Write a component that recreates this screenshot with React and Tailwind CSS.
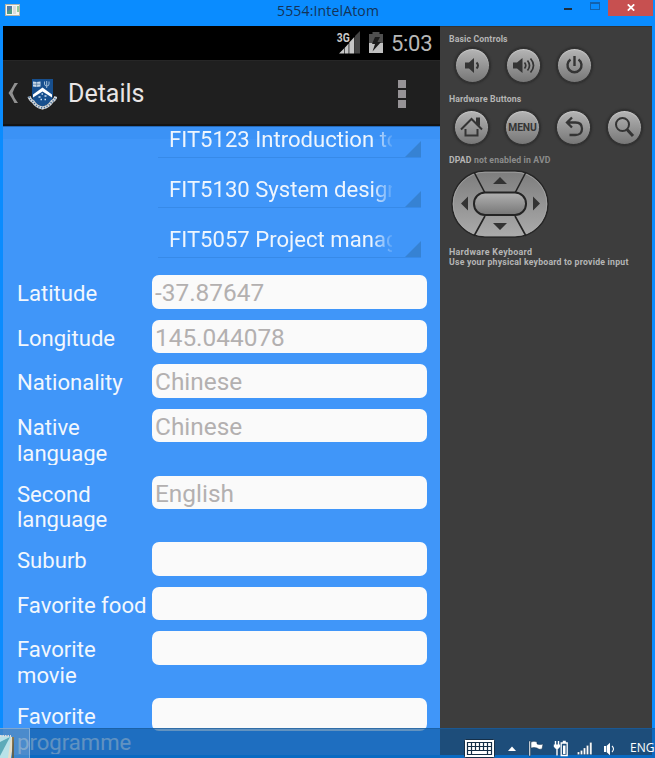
import React from "react";

const courses = ["FIT5123 Introduction to", "FIT5130 System design", "FIT5057 Project manage"];

const fields = [
  { lines: ["Latitude"], value: "-37.87647" },
  { lines: ["Longitude"], value: "145.044078" },
  { lines: ["Nationality"], value: "Chinese" },
  { lines: ["Native", "language"], value: "Chinese" },
  { lines: ["Second", "language"], value: "English" },
  { lines: ["Suburb"], value: "" },
  { lines: ["Favorite food"], value: "" },
  { lines: ["Favorite", "movie"], value: "" },
  { lines: ["Favorite", "programme"], value: "" },
];

function TitleBar() {
  return (
    <header className="flex h-[26px] shrink-0 items-start">
      <svg className="mt-1 ml-[5px] h-3 w-[15px] shrink-0" viewBox="0 0 15 12">
        <rect x=".5" y=".5" width="14" height="11" fill="#f4f4f0" stroke="#b5b5a8" />
        <rect x="2" y="2" width="5" height="8" fill="#4e9a86" />
        <path d="M2 2h5v2L2 8z" fill="#4f7aa8" />
        <rect x="8" y="2" width="3" height="8" fill="#dcdcdc" />
        <rect x="12" y="2" width="2" height="6" fill="#8fcb9b" />
      </svg>
      <div className="w-[257px]" />
      <div className="w-[281px] pt-[2px] font-['Open_Sans',sans-serif] text-[14px] leading-[18px] tracking-[0.16px] text-[#143357]">
        5554:IntelAtom
      </div>
      <div className="mt-2 ml-[6px] h-[2px] w-2 bg-[#1c2c3c]" />
      <div className="mt-[2px] ml-[18px] h-2 w-[10px] border border-t-2 border-[#1262ae]" />
      <div className="ml-2 flex h-4 w-[45px] items-center justify-center bg-[#c75050]">
        <svg className="mb-[2px] h-[7px] w-2" viewBox="0 0 8 7">
          <path d="M.8.4 7.2 6.6M7.2.4.8 6.6" stroke="#fff" strokeWidth="1.8" />
        </svg>
      </div>
    </header>
  );
}

function StatusBar() {
  return (
    <div className="flex h-[34px] items-start bg-black">
      <svg className="mt-1 ml-[333px] h-6 w-[26px] shrink-0" viewBox="0 0 26 24">
        <text x=".7" y="11.5" fontSize="12" fontWeight="700" textLength="13" lengthAdjust="spacingAndGlyphs" fill="#c9c9c9" fontFamily="Roboto, sans-serif">3G</text>
        <path d="M3 23.5 8 18.5v5z M8.600 18l4-4.500v10h-4z M13.300 12.500l5-5.500v16.500h-5z" fill="#c6c6c6" />
        <path d="M19 6l5-5v22.500h-5z" fill="#454545" />
      </svg>
      <svg className="mt-1 ml-[6px] h-6 w-[16px] shrink-0" viewBox="0 0 16 24">
        <path d="M4.500 2h7v2h3.500v11H1V4h3.500z" fill="#505050" />
        <path d="M1 13h14v10H1z" fill="#c0c0c0" />
        <path d="M7 7h5l-2.500 5H13L4.500 21.500 7 14H4z" fill="#1c1c1c" />
      </svg>
      <span className="ml-[7px] pt-[4px] text-[22px] leading-7 tracking-[-0.3px] text-[#b8b8b8]">5:03</span>
    </div>
  );
}

function Crest() {
  return (
    <svg className="h-[32px] w-[30px] shrink-0" viewBox="0 0 30 32">
      <path d="M5 1h21v17q0 6-10.500 11Q5 24 5 18z" fill="#174f8e" />
      <path d="M6 3.500l3.500.5 4-.5V8.500L9.500 9 6 8.500z" fill="#c8d8e8" />
      <path d="M9.700 4v5M6 6.200h7" stroke="#4b7198" strokeWidth=".7" />
      <path d="M17.500 3.500v2.500q0 2 2.300 2T22 6V3.500M19.700 3v7" stroke="#9fbbd6" strokeWidth="1" fill="none" />
      <path d="M15.500 9.500 25 16.500v3l-9.500-6L6 19.500v-3z" fill="#fff" />
      <path d="M11.500 19h2M17.500 18h2M14.500 16h1.500M13.500 21.500h1.500M17.500 21.500h1.500" stroke="#c9e0f3" strokeWidth="1.600" />
      <path d="M2 18.500q1.500 4 4 5 3 5 9.500 6.500Q22 28.500 25 23.500q2.500-1 4-5" fill="none" stroke="#d5d9dd" strokeWidth="3.200" />
      <path d="M2 18.500q1.500 4 4 5 3 5 9.500 6.500Q22 28.500 25 23.500q2.500-1 4-5" fill="none" stroke="#416890" strokeWidth="1.600" strokeDasharray="1.200 1.600" />
    </svg>
  );
}

function ActionBar() {
  return (
    <div className="flex h-[66px] items-center border-t border-b-2 border-[#262626] border-b-[#141414] bg-[#1f1f1f]">
      <svg className="mt-[1px] ml-[5px] h-5 w-[11px]" viewBox="0 0 11 20">
        <path d="M10 0Q6 5 4.500 10 6 15 10 20H6.500Q4 15 .5 10 4 5 6.500 0z" fill="#919191" />
      </svg>
      <div className="mt-[3px] ml-2"><Crest /></div>
      <h1 className="ml-[11px] pt-[3px] text-[25px] leading-8 text-[#e9e5e5]">Details</h1>
      <div className="mt-[2px] mr-[34px] ml-auto flex flex-col gap-[2px]">
        <i className="size-2 bg-[#969396]" />
        <i className="size-2 bg-[#969396]" />
        <i className="size-2 bg-[#969396]" />
      </div>
    </div>
  );
}

function Spinner({ label }) {
  return (
    <div className="flex h-[50.2px] w-[263px] items-end border-b border-[#378ae8]">
      <div className="mb-[5px] ml-[11px] w-[223px] overflow-hidden text-[22.1px] leading-[26px] whitespace-nowrap text-[#eef5fd] [mask-image:linear-gradient(to_right,#000_91%,rgb(0_0_0/0.15))]">
        {label}
      </div>
      <svg className="ml-auto size-4 shrink-0" viewBox="0 0 16 16">
        <path d="M16 0v16H0z" fill="#3682d3" />
      </svg>
    </div>
  );
}

function Field({ lines, value }) {
  return (
    <div className={"mb-[11px] flex shrink-0 overflow-hidden " + (lines.length > 1 ? "h-[55.7px]" : "h-[33.5px]")}>
      <label className="ml-[14px] w-[135px] shrink-0 pt-[6px] text-[22.1px] leading-[25.8px] whitespace-nowrap text-[#f2f7fd]">
        {lines.map((line) => (
          <span key={line} className="block">{line}</span>
        ))}
      </label>
      <div className="h-[33.5px] w-[275px] rounded-[7px] bg-[#fafafa] pt-[3px] pl-[3px] text-[24.4px] leading-[30px] text-[#b3b0b0]">
        {value}
      </div>
    </div>
  );
}

function Phone() {
  return (
    <main className="flex h-full w-[437px] shrink-0 flex-col overflow-hidden bg-[#4096f9] font-[Roboto,sans-serif]">
      <StatusBar />
      <ActionBar />
      <section className="relative flex min-h-0 flex-1 flex-col overflow-hidden">
        <div className="absolute inset-x-0 top-0 h-[13px] border-t border-[#2469b8] bg-[#338bf0]/30" />
        <div className="-mt-[18.5px] ml-[155px] shrink-0">
          {courses.map((course) => <Spinner key={course} label={course} />)}
        </div>
        <div className="mt-[17.3px] flex flex-col">
          {fields.map((field) => <Field key={field.lines.join(" ")} {...field} />)}
        </div>
      </section>
    </main>
  );
}

function RoundButton({ children }) {
  return (
    <button className="flex size-[35px] items-center justify-center rounded-full border border-[#303030] bg-linear-to-b from-[#b5b5b5] to-[#777] shadow-[0_0_2px_1px_#2b2b2b,inset_0_1px_1px_#c9c9c9]">
      {children}
    </button>
  );
}

function Glyph({ children }) {
  return (
    <svg className="size-[27px] shrink-0" viewBox="0 0 27 27" fill="none" stroke="#343434" strokeWidth="2">
      {children}
    </svg>
  );
}

function Dpad() {
  return (
    <svg className="mt-[4px] ml-[1px] h-[70px] w-[100px]" viewBox="0 0 100 70">
      <defs>
        <linearGradient id="pad" x2="0" y2="1">
          <stop stopColor="#7d7d7d" /><stop offset="1" stopColor="#ababab" />
        </linearGradient>
        <linearGradient id="key" x2="0" y2="1">
          <stop stopColor="#b2b2b2" /><stop offset="1" stopColor="#767676" />
        </linearGradient>
      </defs>
      <rect x="2" y="2" width="96" height="66" rx="33" fill="url(#pad)" stroke="#262626" strokeWidth="1.500" />
      <rect x="3.200" y="3.200" width="93.600" height="63.600" rx="31.800" fill="none" stroke="#aaa" strokeWidth=".7" />
      <path d="M24 3l11 21M76 3 65 24M24 67l11-20M76 67 65 47" stroke="#242424" strokeWidth="1.600" />
      <rect x="24" y="23.500" width="52" height="22.500" rx="11" fill="url(#key)" stroke="#242424" strokeWidth="2" />
      <path d="M50 8l7 7H43zM50 61l7-7H43zM11 34.500l7-7v14zM90 34.500l-7-7v14z" fill="#333" />
    </svg>
  );
}

function Controls() {
  return (
    <aside className="flex h-full w-[212px] shrink-0 flex-col border-t border-[#333] bg-[#3d3d3d] pl-[9px] font-[Roboto,sans-serif] text-[8.7px] leading-[10px] font-bold tracking-[0.14px] text-[#b5b5b5]">
      <p className="mt-[7px]">Basic Controls</p>
      <div className="mt-[4px] ml-[6px] flex gap-4">
        <RoundButton>
          <Glyph>
            <path d="M6 10.500h4l5-4.500v15l-5-4.500H6z" fill="#343434" stroke="none" />
            <path d="M17.500 10.500q3 3 0 6" />
          </Glyph>
        </RoundButton>
        <RoundButton>
          <Glyph>
            <path d="M3 10.500h4L12.500 6v15L7 16.500H3z" fill="#343434" stroke="none" />
            <path d="M14.500 10.500q2.500 3 0 6M17.500 8.500q4 5 0 10M20.500 6.500q6 7 0 14" strokeWidth="1.700" />
          </Glyph>
        </RoundButton>
        <RoundButton>
          <Glyph><path d="M13.500 4v10M9.500 7.500a7 7 0 1 0 8 0" strokeWidth="2.400" /></Glyph>
        </RoundButton>
      </div>
      <p className="mt-[11px]">Hardware Buttons</p>
      <div className="mt-[6px] ml-[5px] flex gap-4">
        <RoundButton>
          <Glyph>
            <path d="M3 15.500 13.500 5 24 15.500M19 10V4.500h2v7M7.500 15v6.500h12V15" />
          </Glyph>
        </RoundButton>
        <RoundButton>
          <span className="text-[10.3px] tracking-[-0.1px] text-[#343434]">MENU</span>
        </RoundButton>
        <RoundButton>
          <Glyph>
            <path d="M12 3.500 7 8.500l5 5M7.500 8.500h8q6.500 0 6.500 6.300T15 21H9.500" strokeWidth="2.300" />
          </Glyph>
        </RoundButton>
        <RoundButton>
          <Glyph>
            <circle cx="11.500" cy="10.500" r="6.500" />
            <path d="m16 15.500 6 6.500" strokeWidth="3" />
          </Glyph>
        </RoundButton>
      </div>
      <p className="mt-[10px]">DPAD <span className="text-[#8c8c8c]">not enabled in AVD</span></p>
      <Dpad />
      <p className="mt-[8px] text-[8.9px] tracking-[0.3px]">Hardware Keyboard</p>
      <p className="tracking-[0.22px]">Use your physical keyboard to provide input</p>
    </aside>
  );
}

function Taskbar() {
  return (
    <footer className="absolute inset-x-0 bottom-0 flex h-[30px] items-start border-t border-[#1a5d9e]/70 bg-[rgb(11,87,158)]/63">
      <div className="-mt-px h-[30px] w-[30px] shrink-0 border-t border-r border-white/30 bg-white/20">
        <svg className="mt-[5px] h-6 w-[18px]" viewBox="0 0 18 24">
          <path d="M0 1 13 3 9 24H0z" fill="#b8e2e8" />
          <path d="M0 8 10 3 0 22z" fill="#5cabb9" />
          <path d="M11 3h3l-3 21H8z" fill="#e6dfca" />
          <path d="M13 3v21" stroke="#6d5627" strokeWidth="1.500" />
          <path d="M0 2h11" stroke="#ddd" strokeWidth="2" strokeDasharray="1.500 1" />
        </svg>
      </div>
      <svg className="mt-[10px] ml-[434px] h-[20px] w-[31px] shrink-0" viewBox="0 0 31 20">
        <rect x=".5" y=".5" width="30" height="18" rx="1" fill="#fff" stroke="#152f48" />
        <path d="M3.500 3.500h24v12h-24zM3.500 7.500h24M3.500 11.500h24M7.500 3.500v8M11.500 3.500v8M15.500 3.500v8M19.500 3.500v8M23.500 3.500v8M7.500 11.500v4M23.500 11.500v4" fill="none" stroke="#132d45" strokeWidth="1.200" />
      </svg>
      <svg className="mt-[17px] ml-[13px] h-[6px] w-2 shrink-0" viewBox="0 0 8 6"><path d="M4 .5 8 5H0z" fill="#fff" /></svg>
      <svg className="mt-[11px] ml-[12px] h-[17px] w-4 shrink-0" viewBox="0 0 16 17">
        <path d="M1 1h1.500v15H1zM3 2q3-1.500 6 0v2q3 1 6 0l-1 5q-3 1-5-1-3-1-6 0z" fill="#fff" stroke="#17334d" strokeWidth=".5" />
      </svg>
      <svg className="mt-[11px] ml-[9px] h-[17px] w-4 shrink-0" viewBox="0 0 16 17">
        <path d="M2.500 1v4M5.500 1v4M4 8v7.500" fill="none" stroke="#fff" strokeWidth="1.400" />
        <path d="M.8 4.500h6.400v2Q6 9 4 9T.8 6.500z" fill="#fff" />
        <path d="M8.200 3h6v12.500h-6zM9.800 1.500h3" fill="none" stroke="#fff" strokeWidth="1.300" />
        <path d="M10 5.500h2.500V14H10z" fill="#fff" />
      </svg>
      <svg className="mt-[12px] ml-[8px] h-[15px] w-[17px] shrink-0" viewBox="0 0 17 15">
        <path d="M.5 11h2v2.500h-2zM3.500 9.500h2v4h-2zM6.500 7h2v6.500h-2zM9.500 4.500h2v9h-2zM12.800 1.500h2v12h-2z" fill="#fff" stroke="#17334d" strokeWidth=".2" />
      </svg>
      <svg className="mt-[13px] ml-[9px] h-[14px] w-[13px] shrink-0" viewBox="0 0 13 14">
        <path d="M1 4h2.500L7 .8v12.500L3.500 10H1z" fill="#fff" />
        <path d="M3.500 3v8" stroke="#315f88" strokeWidth=".7" />
        <path d="M9 4q3 3 0 6" fill="none" stroke="#fff" strokeWidth="1.100" />
      </svg>
      <span className="mt-[11px] ml-[14px] font-['Open_Sans',sans-serif] text-[12px] leading-4 text-white">ENG</span>
    </footer>
  );
}

export default function App() {
  return (
    <div className="relative flex h-[758px] w-[655px] flex-col overflow-hidden bg-[#0a8cff]">
      <TitleBar />
      <div className="flex h-[729px] pl-[3px]">
        <Phone />
        <Controls />
      </div>
      <Taskbar />
    </div>
  );
}
